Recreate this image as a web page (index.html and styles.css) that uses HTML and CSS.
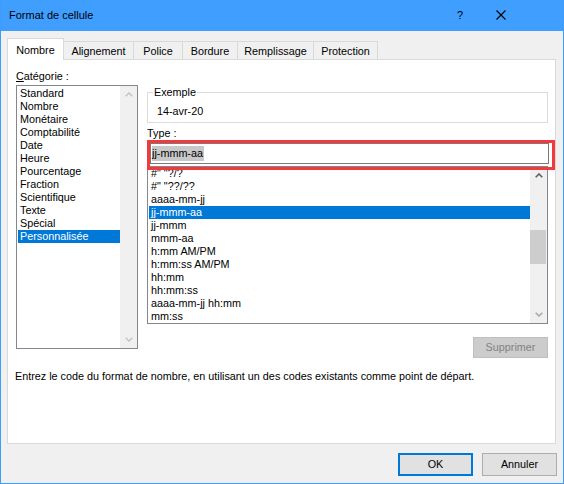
FILE: index.html
```html
<!DOCTYPE html>
<html lang="fr">
<head>
<meta charset="utf-8">
<title>Format de cellule</title>
<link rel="stylesheet" href="styles.css">
</head>
<body>
<div class="window">
  <div class="titlebar">
    <span class="title">Format de cellule</span>
    <span class="help">?</span>
    <svg class="close" width="10" height="10" viewBox="0 0 10 10"><path d="M0.5 0.5 L9.5 9.5 M9.5 0.5 L0.5 9.5" stroke="#000" stroke-width="1.1" fill="none"/></svg>
  </div>
  <div class="client">
    <div class="tabs">
      <div class="tab active t-nombre">Nombre</div>
      <div class="tab t-align">Alignement</div>
      <div class="tab t-police">Police</div>
      <div class="tab t-bord">Bordure</div>
      <div class="tab t-remp">Remplissage</div>
      <div class="tab t-prot">Protection</div>
    </div>
    <div class="panel">
      <div class="cols">
        <div class="left">
          <div class="label"><span class="ul">C</span>atégorie :</div>
          <div class="listbox cat">
            <div class="items">
              <div class="item">Standard</div>
              <div class="item">Nombre</div>
              <div class="item">Monétaire</div>
              <div class="item">Comptabilité</div>
              <div class="item">Date</div>
              <div class="item">Heure</div>
              <div class="item">Pourcentage</div>
              <div class="item">Fraction</div>
              <div class="item">Scientifique</div>
              <div class="item">Texte</div>
              <div class="item">Spécial</div>
              <div class="item selected">Personnalisée</div>
            </div>
            <div class="scrollbar">
              <div class="sb-btn"><svg width="8" height="5" viewBox="0 0 8 5"><path d="M0.7 4.3 L4 1 L7.3 4.3" stroke="#c4c4c4" stroke-width="1.5" fill="none"/></svg></div>
              <div class="sb-track"></div>
              <div class="sb-btn"><svg width="8" height="5" viewBox="0 0 8 5"><path d="M0.7 0.7 L4 4 L7.3 0.7" stroke="#c4c4c4" stroke-width="1.5" fill="none"/></svg></div>
            </div>
          </div>
        </div>
        <div class="right">
          <fieldset class="sample">
            <legend>Exemple</legend>
            <div class="sample-value">14-avr-20</div>
          </fieldset>
          <div class="label type-label">Type :</div>
          <div class="typebox">
            <div class="input"><span class="sel">jj-mmm-aa</span></div>
            <div class="redmark"></div>
          </div>
          <div class="listbox types">
            <div class="items">
              <div class="item">#" "?/?</div>
              <div class="item">#" "??/??</div>
              <div class="item">aaaa-mm-jj</div>
              <div class="item selected">jj-mmm-aa</div>
              <div class="item">jj-mmm</div>
              <div class="item">mmm-aa</div>
              <div class="item">h:mm AM/PM</div>
              <div class="item">h:mm:ss AM/PM</div>
              <div class="item">hh:mm</div>
              <div class="item">hh:mm:ss</div>
              <div class="item">aaaa-mm-jj hh:mm</div>
              <div class="item">mm:ss</div>
            </div>
            <div class="scrollbar">
              <div class="sb-btn"><svg width="8" height="5" viewBox="0 0 8 5"><path d="M0.7 4.3 L4 1 L7.3 4.3" stroke="#606060" stroke-width="1.6" fill="none"/></svg></div>
              <div class="sb-track"><div class="thumb"></div></div>
              <div class="sb-btn"><svg width="8" height="5" viewBox="0 0 8 5"><path d="M0.7 0.7 L4 4 L7.3 0.7" stroke="#a6a6a6" stroke-width="1.5" fill="none"/></svg></div>
            </div>
          </div>
          <div class="btnrow">
            <button class="btn disabled" disabled>Supprimer</button>
          </div>
        </div>
      </div>
      <p class="desc">Entrez le code du format de nombre, en utilisant un des codes existants comme point de départ.</p>
    </div>
    <div class="footer">
      <button class="btn default">OK</button>
      <button class="btn">Annuler</button>
    </div>
  </div>
</div>
</body>
</html>
```
FILE: styles.css
```css
* { box-sizing: border-box; }
html, body { margin: 0; padding: 0; }
body {
  width: 564px;
  height: 484px;
  overflow: hidden;
  font-family: "Liberation Sans", Arial, sans-serif;
  font-size: 10.8px;
  color: #000;
  background: #f0f0f0;
}
.window {
  width: 564px;
  height: 484px;
  border: 1px solid #3f9cff;
  border-top: 0;
  background: #f0f0f0;
  display: flex;
  flex-direction: column;
}
.titlebar {
  height: 31px;
  flex: none;
  background: #409eff;
  display: flex;
  align-items: center;
  padding-left: 8px;
  padding-bottom: 1px;
  font-size: 11px;
}
.title { flex: 1; }
.help { margin-right: 33px; font-size: 11px; }
.close { margin-right: 57px; display: block; }

.client { flex: 1; display: flex; flex-direction: column; }

.tabs {
  display: flex;
  align-items: flex-end;
  margin: 7px 0 0 6px;
  height: 21px;
  position: relative;
  z-index: 1;
}
.tab {
  height: 18px;
  border: 1px solid #d9d9d9;
  border-bottom: 0;
  margin-left: -1px;
  text-align: center;
  line-height: 15px;
  padding-top: 2px;
  background: #f0f0f0;
}
.tab.active {
  height: 22px;
  margin-left: 0;
  margin-bottom: -1px;
  background: #fff;
  padding-top: 4px;
}
.t-nombre { width: 57px; }
.t-align { width: 71px; margin-left: -1px; }
.t-police { width: 50px; }
.t-bord { width: 56px; }
.t-remp { width: 77px; }
.t-prot { width: 65px; }

.panel {
  margin-left: 6px;
  width: 549px;
  height: 385px;
  border: 1px solid #d9d9d9;
  background: #fff;
  padding: 9px 0 0 8px;
}
.cols { display: flex; gap: 9px; }
.left { width: 122px; }
.label { line-height: 15px; height: 15px; }
.ul { text-decoration: underline; }
.left .label { margin-bottom: 1px; }

.listbox {
  border: 1px solid #828790;
  background: #fff;
  display: flex;
  overflow: hidden;
}
.listbox .items { flex: 1; padding-left: 1px; overflow: hidden; }
.item {
  height: 13px;
  line-height: 13px;
  padding-left: 2px;
  white-space: nowrap;
}
.item.selected { background: #0078d7; color: #fff; }
.cat { height: 264px; }
.cat .items { padding-top: 1px; }

.scrollbar {
  width: 17px;
  flex: none;
  background: #f0f0f0;
  display: flex;
  flex-direction: column;
}
.sb-btn {
  height: 17px;
  flex: none;
  display: flex;
  align-items: center;
  justify-content: center;
}
.sb-btn svg { display: block; }
.sb-track { flex: 1; }
.thumb {
  margin: 46px 1px 0 0;
  height: 34px;
  background: #cdcdcd;
}

.right { width: 402px; padding-top: 16px; display: flex; flex-direction: column; }
.sample {
  margin: 0;
  width: 401px;
  border: 1px solid #dcdcdc;
  padding: 4px 9px 3px;
}
.sample legend {
  padding: 0 1px;
  line-height: 15px;
  margin-left: -4px;
}
.sample-value { line-height: 15px; }
.type-label { margin-top: 3px; }

.typebox {
  position: relative;
  margin-top: 2px;
  padding-left: 3px;
}
.input {
  width: 399px;
  height: 21px;
  border: 1px solid #7a7a7a;
  background: #fff;
  padding: 2px 0 0 1px;
  line-height: 15px;
}
.sel { background: #c8c8c8; display: inline-block; padding-right: 1px; }
.redmark {
  position: absolute;
  left: 0;
  top: -3px;
  width: 408px;
  height: 30px;
  border: 3px solid #f2393c;
}

.types {
  margin-top: 2px;
  width: 401px;
  height: 158px;
}

.btnrow {
  display: flex;
  justify-content: flex-end;
  margin-top: 13px;
  padding-right: 1px;
}
.btn {
  font: inherit;
  width: 75px;
  height: 23px;
  border: 1px solid #adadad;
  background: #e1e1e1;
  color: #000;
  padding: 0;
  line-height: 15px;
}
.btn.disabled {
  height: 21px;
  background: #cccccc;
  border-color: #bfbfbf;
  color: #838383;
}
.btn.default { border: 2px solid #0078d7; }

.desc {
  margin: 11px 0 0 -1px;
  line-height: 15px;
}

.footer {
  display: flex;
  justify-content: flex-end;
  gap: 9px;
  margin-top: 9px;
  padding-right: 6px;
}
```
